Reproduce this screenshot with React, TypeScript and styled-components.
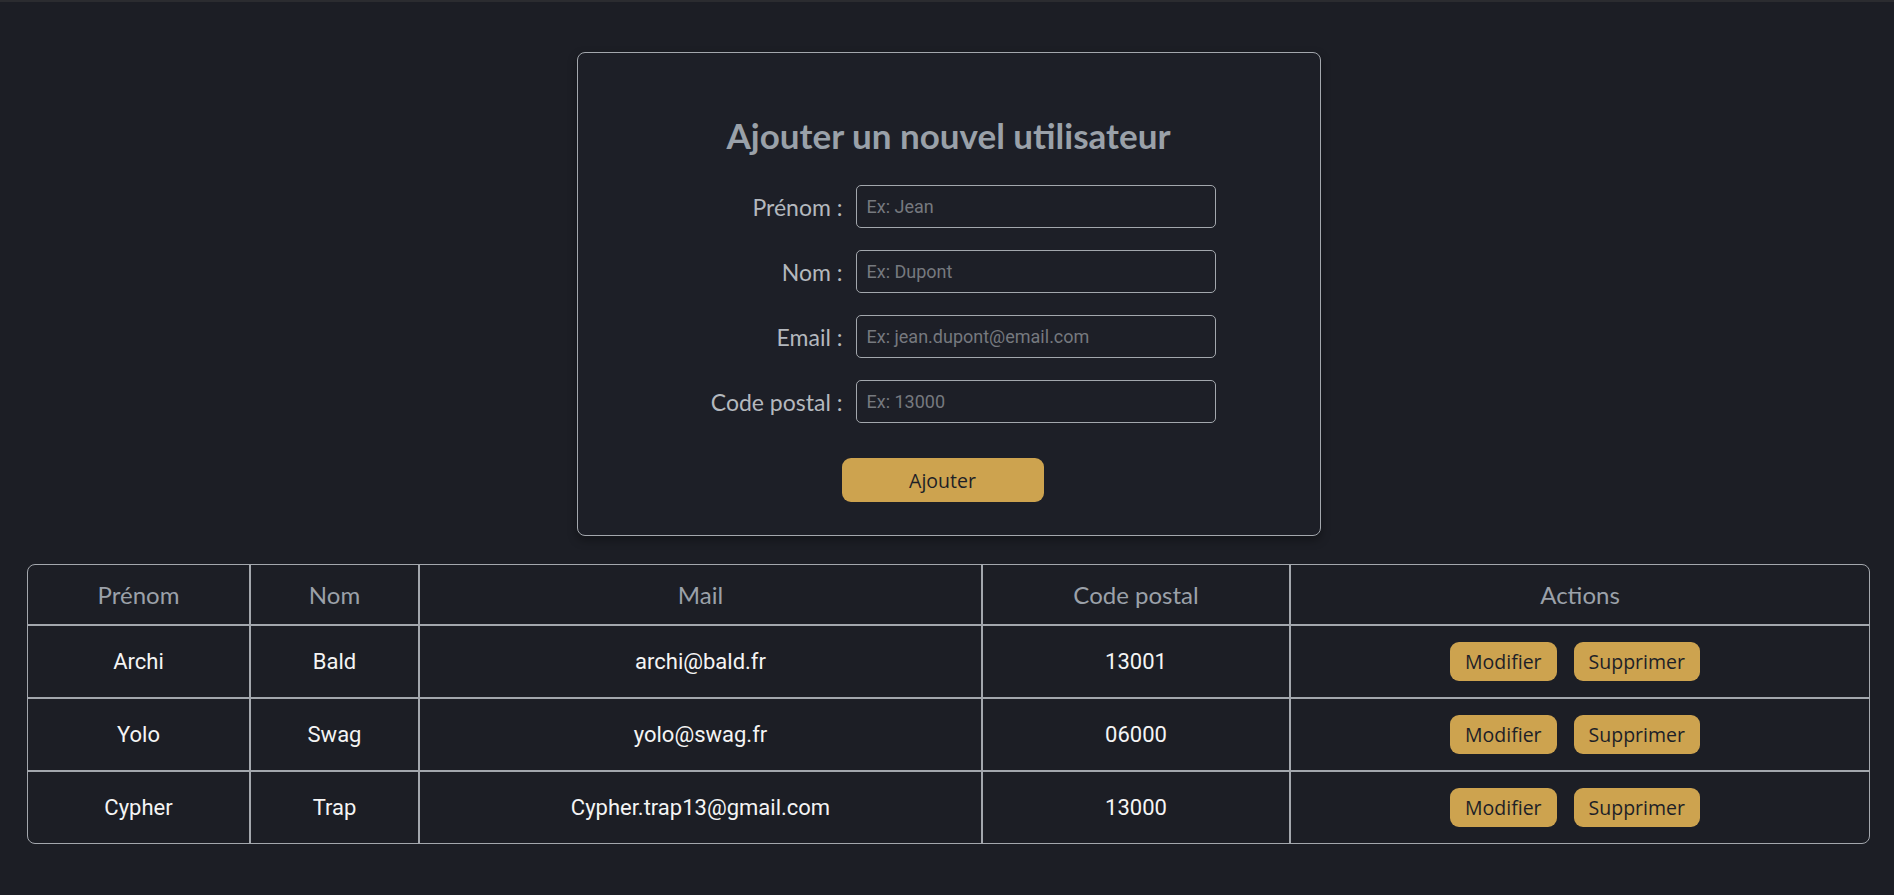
import React, {useState} from "react";
import styled, {createGlobalStyle} from "styled-components";

const GlobalStyle = createGlobalStyle`
  html, body {
    margin: 0;
    background: #1c1e25;
  }
  body {
    border-top: 2px solid #2b2c30;
    min-height: 100vh;
    box-sizing: border-box;
  }
`

type User = { id: number, firstName: string, lastName: string, email: string, zip: string }

const initialUsers: User[] = [
    { id: 1, firstName: 'Archi', lastName: 'Bald', email: 'archi@bald.fr', zip: '13001' },
    { id: 2, firstName: 'Yolo', lastName: 'Swag', email: 'yolo@swag.fr', zip: '06000' },
    { id: 3, firstName: 'Cypher', lastName: 'Trap', email: 'Cypher.trap13@gmail.com', zip: '13000' },
]

const fields = [
    { key: 'firstName', label: 'Prénom :', placeholder: 'Ex: Jean' },
    { key: 'lastName', label: 'Nom :', placeholder: 'Ex: Dupont' },
    { key: 'email', label: 'Email :', placeholder: 'Ex: jean.dupont@email.com' },
    { key: 'zip', label: 'Code postal :', placeholder: 'Ex: 13000' },
] as const

const App = () => {
    const [users, setUsers] = useState(initialUsers)
    const [form, setForm] = useState({ firstName: '', lastName: '', email: '', zip: '' })

    const onAdd = (ev: React.FormEvent) => {
        ev.preventDefault()
        if (!form.firstName && !form.lastName) return
        setUsers(users.concat({ id: Date.now(), ...form }))
        setForm({ firstName: '', lastName: '', email: '', zip: '' })
    }

    const onDelete = (id: number) => setUsers(users.filter(it => it.id !== id))

    return <Page>
        <GlobalStyle/>

        <Card onSubmit={onAdd}>
            <Title>Ajouter un nouvel utilisateur</Title>
            <FormGrid>
                { fields.map(it => <React.Fragment key={it.key}>
                    <Label htmlFor={it.key}>{it.label}</Label>
                    <Input
                        id={it.key}
                        placeholder={it.placeholder}
                        value={form[it.key]}
                        onChange={ev => setForm({ ...form, [it.key]: ev.target.value })}
                    />
                </React.Fragment>) }
            </FormGrid>
            <SubmitButton type="submit">Ajouter</SubmitButton>
        </Card>

        <Table>
            <colgroup>
                <col style={{ width: 223 }}/>
                <col style={{ width: 169 }}/>
                <col style={{ width: 563 }}/>
                <col style={{ width: 308 }}/>
                <col/>
            </colgroup>
            <thead>
                <tr>
                    <Th>Prénom</Th>
                    <Th>Nom</Th>
                    <Th>Mail</Th>
                    <Th>Code postal</Th>
                    <Th>Actions</Th>
                </tr>
            </thead>
            <tbody>
                { users.map(it => <tr key={it.id}>
                    <Td>{it.firstName}</Td>
                    <Td>{it.lastName}</Td>
                    <Td>{it.email}</Td>
                    <Td>{it.zip}</Td>
                    <Td>
                        <Actions>
                            <ActionButton>Modifier</ActionButton>
                            <ActionButton onClick={() => onDelete(it.id)}>Supprimer</ActionButton>
                        </Actions>
                    </Td>
                </tr>) }
            </tbody>
        </Table>
    </Page>
}
export default App



const Page = styled.div`
  display: flex;
  flex-direction: column;
  align-items: center;
  gap: 28px;
  padding: 50px 24px 40px 27px;
`

const Card = styled.form`
  width: 744px;
  box-sizing: border-box;
  border: 1px solid #a3a7ad;
  border-radius: 8px;
  background: #1d1f27;
  box-shadow: 0 4px 10px rgba(0, 0, 0, 0.35);
  padding: 60px 0 33px;
  display: flex;
  flex-direction: column;
  align-items: center;
`

const Title = styled.h1`
  margin: 0 0 28px;
  font: 700 35px "Lato", "Open Sans", sans-serif;
  line-height: 44px;
  color: #9aa1a9;
`

const FormGrid = styled.div`
  align-self: stretch;
  display: grid;
  grid-template-columns: 1fr 360px;
  column-gap: 13px;
  row-gap: 22px;
  padding-right: 104px;
  margin-bottom: 35px;
`

const Label = styled.label`
  justify-self: end;
  align-self: center;
  font: 400 23px "Lato", "Open Sans", sans-serif;
  color: #b4b8be;
`

const Input = styled.input`
  height: 43px;
  box-sizing: border-box;
  border: 1px solid #a3a7ad;
  border-radius: 5px;
  background: transparent;
  padding: 0 10px;
  font: 400 18px "Roboto", sans-serif;
  color: #e8e8e8;
  outline: none;
  &::placeholder {
    color: #76797f;
  }
`

const SubmitButton = styled.button`
  width: 202px;
  height: 44px;
  margin-right: 12px;
  border: none;
  border-radius: 9px;
  background: #cda34f;
  font: 500 19.5px "Open Sans", sans-serif;
  color: #1d1f27;
  cursor: pointer;
`

const Table = styled.table`
  width: 100%;
  table-layout: fixed;
  border-collapse: separate;
  border-spacing: 0;
  border: 1px solid #a3a7ad;
  border-radius: 8px;
  text-align: center;
`

const Th = styled.th`
  height: 59px;
  padding: 0;
  font: 400 24px "Lato", "Open Sans", sans-serif;
  color: #9ba1a9;
  border-bottom: 2px solid #a3a7ad;
  border-right: 2px solid #a3a7ad;
  &:last-child { border-right: none; }
`

const Td = styled.td`
  height: 71px;
  padding: 0;
  font: 400 22px "Roboto", sans-serif;
  color: #f4f4f4;
  border-bottom: 2px solid #a3a7ad;
  border-right: 2px solid #a3a7ad;
  &:last-child { border-right: none; }
  tr:last-child > & { border-bottom: none; }
`

const Actions = styled.div`
  display: flex;
  justify-content: center;
  gap: 17px;
  padding-right: 10px;
`

const ActionButton = styled.button`
  height: 39px;
  padding: 0 15px;
  border: none;
  border-radius: 9px;
  background: #cda34f;
  font: 500 19.5px "Open Sans", sans-serif;
  color: #1d1f27;
  cursor: pointer;
`
